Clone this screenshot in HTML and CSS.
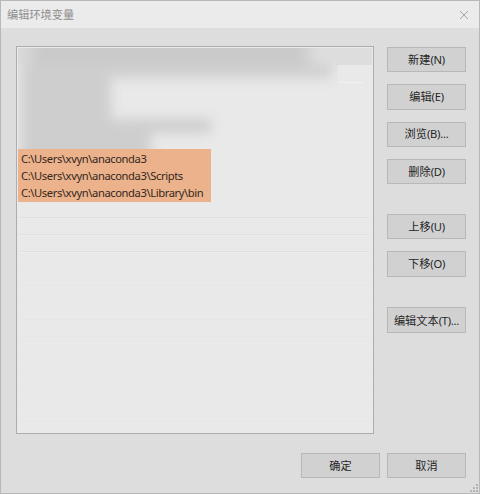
FILE: index.html
```html
<!DOCTYPE html>
<html lang="zh-CN">
<head>
<meta charset="utf-8">
<title>编辑环境变量</title>
<link rel="stylesheet" href="styles.css">
</head>
<body>
<div class="dialog">
  <header class="titlebar">
    <span class="title">编辑环境变量</span>
    <svg class="close" width="10" height="10" viewBox="0 0 10 10"><path d="M1 1L9 9M9 1L1 9"/></svg>
  </header>
  <main class="content">
    <div class="list">
      <div class="hidden-rows">
        <div class="blurred">
          <i class="bar b2"></i><i class="bar b3"></i><i class="bar b5"></i><i class="bar b6"></i><i class="bar b1"></i>
        </div>
        <div class="clear"></div>
      </div>
      <div class="marked">
        <div class="path">C:\Users\xvyn\anaconda3</div>
        <div class="path">C:\Users\xvyn\anaconda3\Scripts</div>
        <div class="path">C:\Users\xvyn\anaconda3\Library\bin</div>
      </div>
      <div class="empty-rows"></div>
    </div>
    <div class="side">
      <button class="btn">新建<span class="key">(N)</span></button>
      <button class="btn">编辑<span class="key">(E)</span></button>
      <button class="btn">浏览<span class="key">(B)...</span></button>
      <button class="btn">删除<span class="key">(D)</span></button>
      <button class="btn up">上移<span class="key">(U)</span></button>
      <button class="btn">下移<span class="key">(O)</span></button>
      <button class="btn text">编辑文本<span class="key">(T)...</span></button>
    </div>
  </main>
  <footer class="footer">
    <button class="btn">确定</button>
    <button class="btn">取消</button>
  </footer>
  <svg class="grip" width="9" height="9" viewBox="0 0 9 9"><path d="M6 0h2v2h-2zM3 3h2v2h-2zM6 3h2v2h-2zM0 6h2v2h-2zM3 6h2v2h-2zM6 6h2v2h-2z"/></svg>
</div>
</body>
</html>
```

FILE: styles.css
```css
* { box-sizing: border-box; }
body {
  margin: 0;
  font-family: "Noto Sans", "Noto Sans CJK SC", sans-serif;
  color: #252525;
}
.dialog {
  position: relative;
  width: 480px;
  height: 494px;
  background: #dddddd;
  border: 1px solid #b8b8b8;
  overflow: hidden;
}
.titlebar {
  height: 27px;
  padding: 0 10px 0 6px;
  background: #ebebeb;
  display: flex;
  align-items: center;
  justify-content: space-between;
}
.title {
  position: relative;
  top: -1px;
  font-family: "Noto Sans CJK SC", sans-serif;
  font-size: 11.2px;
  line-height: 16px;
  color: #8e8e8e;
}
.close { fill: none; stroke: #a6a6a6; stroke-width: 1; }
.content {
  display: flex;
  gap: 13px;
  padding: 18px 13px 0 15px;
}
.list {
  width: 358px;
  height: 388px;
  padding: 1px;
  border: 1px solid #adadad;
  background: #e9e9e9;
  overflow: hidden;
}
.hidden-rows {
  position: relative;
  height: 101px;
  overflow: hidden;
  background: linear-gradient(#dddddd, #dddddd) 100% 0 / 36px 17px no-repeat;
}
.blurred {
  position: absolute;
  inset: -20px 0 -20px -20px;
  filter: blur(6px);
}
.bar {
  position: absolute;
  left: 23px;
  background: #cecece;
}
.b1 { top: 0; left: 0; width: 380px; height: 37px; background: linear-gradient(90deg, #d9d9d9 26px, #cacaca 40px 303px, #dddddd 318px); }
.b2 { top: 35px; width: 311px; height: 15px; background: #cfcfcf; }
.b3 { top: 45px; width: 90px; height: 50px; }
.b5 { top: 91px; width: 190px; height: 14px; }
.b6 { top: 95px; width: 130px; height: 45px; }
.clear {
  position: absolute;
  top: 17px;
  left: 320px;
  right: 0;
  height: 40px;
  background: linear-gradient(#f1f1f1, #f1f1f1) 0 17px / 25px 1px no-repeat #e9e9e9;
}
.marked {
  width: 193px;
  height: 53px;
  padding: 1px 0 0 3px;
  background: #ebb28b;
}
.path {
  font-size: 11.2px;
  line-height: 17px;
  height: 17px;
  letter-spacing: -0.4px;
  color: #34271e;
  white-space: nowrap;
}
.empty-rows {
  height: 230px;
  margin: 0 2px;
  background: repeating-linear-gradient(transparent 0 15px, #e0e0e0 15px 16px, #ededed 16px 17px);
  -webkit-mask-image: linear-gradient(#000 50px, rgba(0,0,0,.3) 53px);
  mask-image: linear-gradient(#000 50px, rgba(0,0,0,.3) 53px);
}
.side {
  width: 79px;
  padding-top: 1px;
  display: flex;
  flex-direction: column;
  gap: 12px;
}
.btn {
  width: 79px;
  height: 25.3px;
  flex: none;
  margin: 0;
  padding: 0 0 1px;
  border: 1px solid #b8b8b8;
  background: #d1d1d1;
  color: #252525;
  font-family: "Noto Sans CJK SC", sans-serif;
  font-size: 11.2px;
  line-height: 16px;
  white-space: nowrap;
}
.key { font-family: "Noto Sans", sans-serif; letter-spacing: -0.25px; }
.up { margin-top: 18px; }
.text { margin-top: 18px; height: 26px; padding: 1px 0 0; }
.footer {
  display: flex;
  justify-content: flex-end;
  gap: 7px;
  padding: 19px 13px 0 0;
}
.grip { position: absolute; right: 0; bottom: 0; fill: #b4b4b4; }
```
